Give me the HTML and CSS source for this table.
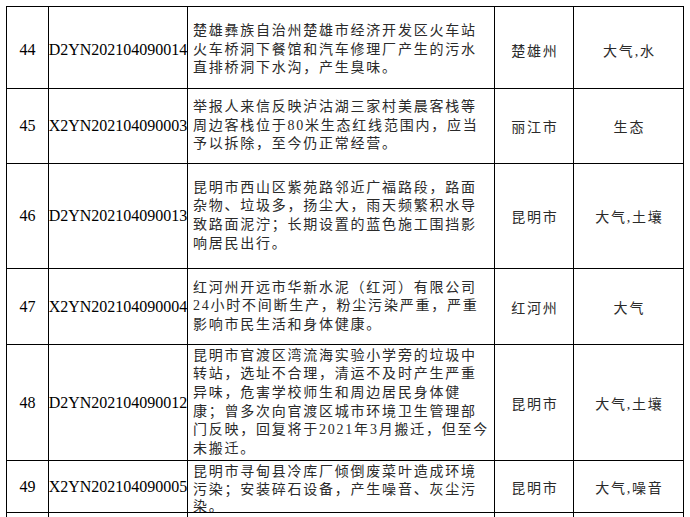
FILE: index.html
```html
<!DOCTYPE html>
<html lang="zh-CN">
<head>
<meta charset="utf-8">
<title>信访件列表</title>
<link rel="stylesheet" href="styles.css">
</head>
<body>
<div class="table">
  <div class="row r44">
    <div class="cell num">44</div>
    <div class="cell code">D2YN202104090014</div>
    <div class="cell desc"><p>楚雄彝族自治州楚雄市经济开发区火车站<br>火车桥洞下餐馆和汽车修理厂产生的污水<br>直排桥洞下水沟，产生臭味。</p></div>
    <div class="cell city">楚雄州</div>
    <div class="cell kind">大气,水</div>
  </div>
  <div class="row r45">
    <div class="cell num">45</div>
    <div class="cell code">X2YN202104090003</div>
    <div class="cell desc"><p>举报人来信反映泸沽湖三家村美晨客栈等<br>周边客栈位于80米生态红线范围内，应当<br>予以拆除，至今仍正常经营。</p></div>
    <div class="cell city">丽江市</div>
    <div class="cell kind">生态</div>
  </div>
  <div class="row r46">
    <div class="cell num">46</div>
    <div class="cell code">D2YN202104090013</div>
    <div class="cell desc"><p>昆明市西山区紫苑路邻近广福路段，路面<br>杂物、垃圾多，扬尘大，雨天频繁积水导<br>致路面泥泞；长期设置的蓝色施工围挡影<br>响居民出行。</p></div>
    <div class="cell city">昆明市</div>
    <div class="cell kind">大气,土壤</div>
  </div>
  <div class="row r47">
    <div class="cell num">47</div>
    <div class="cell code">X2YN202104090004</div>
    <div class="cell desc"><p>红河州开远市华新水泥（红河）有限公司<br>24小时不间断生产，粉尘污染严重，严重<br>影响市民生活和身体健康。</p></div>
    <div class="cell city">红河州</div>
    <div class="cell kind">大气</div>
  </div>
  <div class="row r48">
    <div class="cell num">48</div>
    <div class="cell code">D2YN202104090012</div>
    <div class="cell desc"><p>昆明市官渡区湾流海实验小学旁的垃圾中<br>转站，选址不合理，清运不及时产生严重<br>异味，危害学校师生和周边居民身体健<br>康；曾多次向官渡区城市环境卫生管理部<br>门反映，回复将于2021年3月搬迁，但至今<br>未搬迁。</p></div>
    <div class="cell city">昆明市</div>
    <div class="cell kind">大气,土壤</div>
  </div>
  <div class="row r49">
    <div class="cell num">49</div>
    <div class="cell code">X2YN202104090005</div>
    <div class="cell desc tight"><p>昆明市寻甸县冷库厂倾倒废菜叶造成环境<br>污染；安装碎石设备，产生噪音、灰尘污<br>染。</p></div>
    <div class="cell city">昆明市</div>
    <div class="cell kind">大气,噪音</div>
  </div>
  <div class="row r50">
    <div class="cell num"></div>
    <div class="cell code"></div>
    <div class="cell desc"></div>
    <div class="cell city"></div>
    <div class="cell kind"></div>
  </div>
</div>
</body>
</html>
```

FILE: styles.css
```css
html, body {
  margin: 0;
  padding: 0;
  background: #ffffff;
  overflow: hidden;
}

body {
  padding: 6px 0 0 6px;
  font-family: "Liberation Serif", "Noto Sans CJK SC", serif;
  color: #000;
}

.table {
  width: 678px;
  border-left: 1px solid #000;
  border-top: 1px solid #000;
  box-sizing: border-box;
}

.row {
  display: grid;
  grid-template-columns: 42px 139px 307px 79px 110px;
  border-bottom: 1px solid #000;
  box-sizing: border-box;
}

.r44 { height: 82px; }
.r45 { height: 75px; }
.r46 { height: 105px; }
.r47 { height: 76px; }
.r48 { height: 116px; }
.r49 { height: 52px; }
.r50 { height: 40px; }

.cell {
  border-right: 1px solid #000;
  box-sizing: border-box;
  display: flex;
  align-items: center;
  justify-content: center;
  overflow: hidden;
  white-space: nowrap;
}

.r44 .cell { padding-top: 5px; }

.num,
.code {
  font-size: 16px;
}

.desc {
  justify-content: flex-start;
  padding-left: 5px;
  font-size: 14px;
  color: #2a2a2a;
}

.desc p {
  margin: 0;
  line-height: 18.6px;
  letter-spacing: 1.76px;
}

.desc.tight {
  align-items: flex-start;
  padding-top: 2px;
}

.desc.tight p {
  line-height: 17.5px;
}

.city,
.kind {
  font-size: 14px;
  letter-spacing: 1.8px;
  padding-left: 1.8px;
  color: #2a2a2a;
}
```
